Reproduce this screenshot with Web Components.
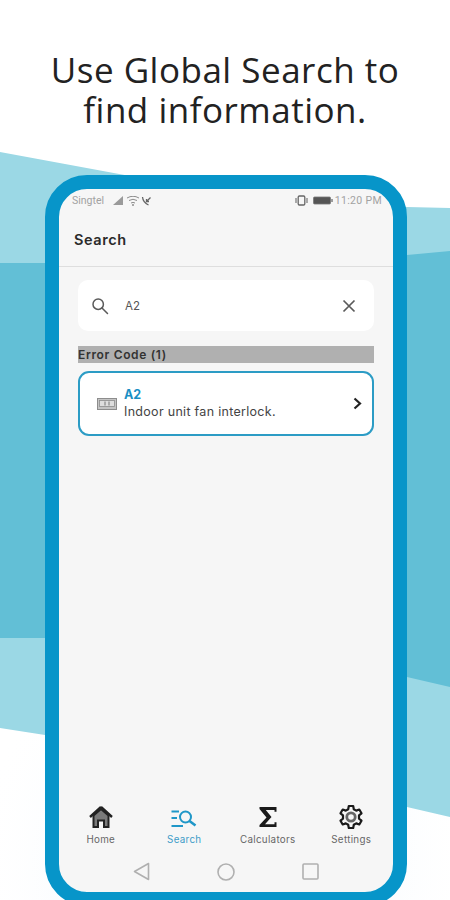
<!DOCTYPE html>
<html>
<head>
<meta charset="utf-8">
<style>
    html, body { margin: 0; padding: 0; background: #fff; }
    body { font-family: "Inter", "Liberation Sans", sans-serif; }
</style>
</head>
<body>
<promo-page>
    <promo-title>Use Global Search to find information.</promo-title>
    <phone-frame>
        <status-bar></status-bar>
        <app-header>Search</app-header>
        <search-box value="A2"></search-box>
        <section-label>Error Code (1)</section-label>
        <result-card code="A2">Indoor unit fan interlock.</result-card>
        <tab-bar>
            <tab-item icon="home" label="Home"></tab-item>
            <tab-item icon="search" label="Search" active></tab-item>
            <tab-item icon="sigma" label="Calculators"></tab-item>
            <tab-item icon="gear" label="Settings"></tab-item>
        </tab-bar>
        <nav-bar></nav-bar>
    </phone-frame>
</promo-page>

<script>
function defineEl(name, html, props) {
    let tpl = document.createElement('template');
    tpl.innerHTML = html;
    class El extends HTMLElement {
        constructor() {
            super();
            this.shadow = this.attachShadow({mode: 'open'});
            this.shadow.append(tpl.content.cloneNode(true));
        }
        connectedCallback() {
            if (props) props.call(this, this.shadow);
        }
    }
    window.customElements.define(name, El);
}

defineEl('promo-page', `
<style>
    :host { display: block; position: relative; width: 450px; height: 900px; overflow: hidden; background: #fff; }
    #bg { position: absolute; left: 0; top: 0; width: 450px; height: 900px; }
    #content { position: relative; display: flex; flex-direction: column; height: 900px; }
</style>
<svg id="bg" viewBox="0 0 450 900">
    <defs>
        <radialGradient id="glow" cx="225" cy="860" r="250" gradientUnits="userSpaceOnUse">
            <stop offset="0" stop-color="#d8e9fa"/>
            <stop offset="1" stop-color="#ffffff" stop-opacity="0"/>
        </radialGradient>
    </defs>
    <rect x="0" y="640" width="450" height="260" fill="url(#glow)"/>
    <polygon points="0,152 130,176 300,195 407,207 450,208 450,817 407,807 100,760 45,735 0,728" fill="#9bd8e5"/>
    <polygon points="0,263 100,263 350,260 407,255 450,251 450,687 407,677 60,638 0,638" fill="#62bfd6"/>
</svg>
<div id="content"><slot></slot></div>
`);

defineEl('promo-title', `
<style>
    :host { display: block; height: 175px; flex: none; box-sizing: border-box; padding: 50px 40px 0; text-align: center;
        font: 400 35px/40px "Open Sans", "Liberation Sans", sans-serif; letter-spacing: .5px; color: #222; }
</style>
<slot></slot>
`);

defineEl('phone-frame', `
<style>
    :host { display: flex; flex-direction: column; box-sizing: border-box; width: 362px; height: 731px; margin-left: 45px;
        border: 14px solid #0795c9; border-radius: 42px; background: #f6f6f6; overflow: hidden; flex: none; }
    #fill { display: flex; flex-direction: column; height: 100%; }
</style>
<div id="fill"><slot></slot></div>
`);

defineEl('status-bar', `
<style>
    :host { display: flex; align-items: center; height: 23px; padding: 0 11px 0 13px; flex: none;
        font: 400 10.5px "Roboto", "Liberation Sans", sans-serif; color: #a2a2a2; }
    svg { display: block; }
    .sp { flex: 1; }
</style>
<span>Singtel</span>
<svg width="13" height="10" viewBox="0 0 13 10" style="margin-left:8px"><path d="M1 9 L11 0 V9 Z" fill="#9a9a9a"/></svg>
<svg width="14" height="10" viewBox="0 0 14 10" style="margin-left:1px"><path d="M1 2 Q7 -1.5 13 2 M3 4.5 Q7 2 11 4.5 M5 7 Q7 5.8 9 7" fill="none" stroke="#8c8c8c" stroke-width="1"/><circle cx="7" cy="9" r="1" fill="#8c8c8c"/></svg>
<svg width="11" height="10" viewBox="0 0 11 10" style="margin-left:1px"><path d="M1.5 1 Q2 6.5 7.5 9 M9.5 1.5 L5.5 5.5 M5.5 3 V5.5 H8" fill="none" stroke="#666" stroke-width="1.3"/></svg>
<span class="sp"></span>
<svg width="13" height="11" viewBox="0 0 13 11"><rect x="3.2" y="1" width="6.6" height="9" rx="1.2" fill="none" stroke="#666" stroke-width="1.3"/><path d="M1 3 V8 M12 3 V8" stroke="#777" stroke-width="1.2"/></svg>
<svg width="20" height="9" viewBox="0 0 20 9" style="margin-left:5px"><rect x="0.5" y="1" width="17" height="7" rx="1" fill="#555" stroke="#777" stroke-width=".8"/><rect x="18.3" y="3" width="1.4" height="3" fill="#777"/></svg>
<span style="margin-left:2px;letter-spacing:.35px">11:20 PM</span>
`);

defineEl('app-header', `
<style>
    :host { display: flex; align-items: center; height: 55px; padding: 0 0 0 15px; box-sizing: border-box; flex: none;
        border-bottom: 1px solid #dedede; margin-bottom: 13px;
        font: 600 14.5px "Inter", "Liberation Sans", sans-serif; letter-spacing: .6px; color: #2a2a2a; }
</style>
<slot></slot>
`);

defineEl('search-box', `
<style>
    :host { display: flex; align-items: center; height: 51px; margin: 0 19px; padding: 0 18px 0 13px; flex: none;
        background: #fff; border-radius: 10px; font: 400 11.5px "Inter", "Liberation Sans", sans-serif; color: #555; }
    svg { display: block; flex: none; }
    #val { flex: 1; margin-left: 16px; }
</style>
<svg width="18" height="18" viewBox="0 0 18 18" fill="none" stroke="#5a5a5a" stroke-width="1.5"><circle cx="7.2" cy="7.2" r="5.2"/><path d="M11 11 L16.5 16.5" stroke-linecap="round"/></svg>
<span id="val"></span>
<svg width="14" height="14" viewBox="0 0 14 14" fill="none" stroke="#5a5a5a" stroke-width="1.7"><path d="M1.5 1.5 L12.5 12.5 M12.5 1.5 L1.5 12.5"/></svg>
`, function(s) {
    s.getElementById('val').textContent = this.getAttribute('value');
});

defineEl('section-label', `
<style>
    :host { display: flex; align-items: center; height: 17px; margin: 15px 19px 0; flex: none; background: #b0b0b0;
        font: 600 12px "Inter", "Liberation Sans", sans-serif; letter-spacing: .65px; color: #333; }
</style>
<slot></slot>
`);

defineEl('result-card', `
<style>
    :host { display: flex; align-items: center; box-sizing: border-box; height: 65px; margin: 8px 19px 0; padding: 0 10px 0 17px; flex: none;
        background: #fff; border: 2px solid #2c9cc5; border-radius: 11px; }
    svg { display: block; flex: none; }
    #txt { flex: 1; margin-left: 7px; display: flex; flex-direction: column; }
    #code { font: 700 12.5px/16px "Inter", "Liberation Sans", sans-serif; color: #1a8fc4; }
    #desc { font: 400 12.5px/17px "Inter", "Liberation Sans", sans-serif; letter-spacing: .3px; color: #444; }
</style>
<svg width="20" height="12" viewBox="0 0 20 12"><rect x=".5" y=".5" width="19" height="11" fill="#c4c4c4" stroke="#8d8d8d"/><rect x="2.5" y="2.5" width="15" height="6" fill="#dedede" stroke="#8d8d8d" stroke-width=".8"/><path d="M8 3.5 V7.5 M12 3.5 V7.5" stroke="#777" stroke-width="1"/></svg>
<div id="txt"><span id="code"></span><span id="desc"><slot></slot></span></div>
<svg width="9" height="13" viewBox="0 0 9 13" fill="none" stroke="#222" stroke-width="2.2"><path d="M1.5 1.5 L7 6.5 L1.5 11.5"/></svg>
`, function(s) {
    s.getElementById('code').textContent = this.getAttribute('code');
});

defineEl('tab-bar', `
<style>
    :host { display: grid; grid-template-columns: repeat(4, 1fr); margin-top: auto; flex: none; }
</style>
<slot></slot>
`);

const tabIcons = {
    home: `<svg width="26" height="24" viewBox="0 0 26 24"><path d="M13 2 L24 12 M13 2 L2 12" stroke="#222" stroke-width="2.4" fill="none"/><path d="M5.5 10.5 V22 H10 V15.5 H16 V22 H20.5 V10.5 L13 4 Z" fill="#7a7a7a" stroke="#222" stroke-width="2"/></svg>`,
    search: `<svg width="26" height="24" viewBox="0 0 26 24" fill="none" stroke="#1f97c8" stroke-width="2"><path d="M0.5 6.5 H8 M0.5 13 H6 M0.5 21 H12"/><circle cx="14.5" cy="12" r="5.5"/><path d="M18.5 16 L24.5 20.5" stroke-width="2.6"/></svg>`,
    sigma: `<svg width="26" height="24" viewBox="0 0 26 24"><path d="M4.5 2 H21.5 V6.8 H19.5 V5 H10.8 L16.5 12 L10 19.2 H19.5 V17.2 H21.5 V22 H4.5 V20 L11.5 12.5 L4.5 4 Z" fill="#1a1a1a"/></svg>`,
    gear: `<svg width="26" height="26" viewBox="0 0 26 26" fill="none" stroke="#1a1a1a" stroke-width="2.2"><path d="M10.8 2 H15.2 L15.8 5.2 L18.2 6.6 L21.3 5.5 L23.5 9.3 L21 11.4 V14.6 L23.5 16.7 L21.3 20.5 L18.2 19.4 L15.8 20.8 L15.2 24 H10.8 L10.2 20.8 L7.8 19.4 L4.7 20.5 L2.5 16.7 L5 14.6 V11.4 L2.5 9.3 L4.7 5.5 L7.8 6.6 L10.2 5.2 Z" stroke-linejoin="round"/><circle cx="13" cy="13" r="4.2" stroke="#666" stroke-width="2.8"/></svg>`
};

defineEl('tab-item', `
<style>
    :host { display: flex; flex-direction: column; align-items: center; height: 50px; justify-content: flex-start;
        font: 400 9.8px/12px "Inter", "Liberation Sans", sans-serif; letter-spacing: .3px; color: #666; }
    :host([active]) { color: #3d9cc8; }
    #ic { height: 26px; display: flex; align-items: center; justify-content: center; margin-bottom: 4px; }
    svg { display: block; }
</style>
<div id="ic"></div>
<span id="lb"></span>
`, function(s) {
    s.getElementById('ic').innerHTML = tabIcons[this.getAttribute('icon')];
    s.getElementById('lb').textContent = this.getAttribute('label');
});

defineEl('nav-bar', `
<style>
    :host { display: grid; grid-template-columns: repeat(3, 84px); justify-content: center; align-items: center; height: 38px; padding-bottom: 3px; box-sizing: border-box; flex: none; }
    svg { display: block; justify-self: center; }
</style>
<svg width="17" height="19" viewBox="0 0 17 19" fill="none" stroke="#b0b0b0" stroke-width="1.6" style="margin-right:2px"><path d="M15.5 1.5 V17.5 L1.5 9.5 Z" stroke-linejoin="round"/></svg>
<svg width="18" height="18" viewBox="0 0 18 18" fill="none" stroke="#b0b0b0" stroke-width="1.6"><circle cx="9" cy="9" r="8"/></svg>
<svg width="17" height="17" viewBox="0 0 17 17" fill="none" stroke="#b0b0b0" stroke-width="1.6"><rect x="1" y="1" width="15" height="15" rx="1"/></svg>
`);
</script>
</body>
</html>
